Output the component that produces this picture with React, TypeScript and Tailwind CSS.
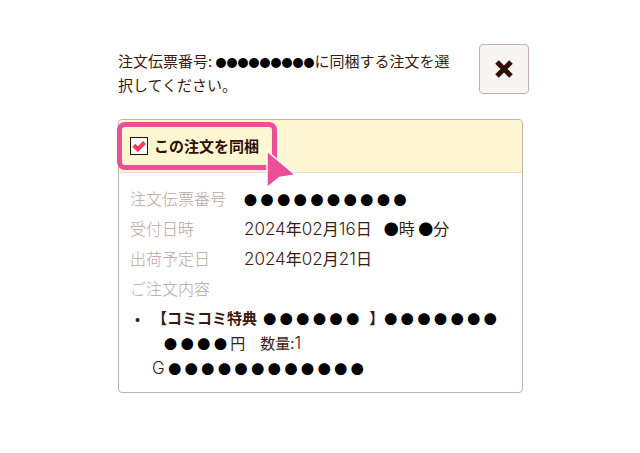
import { Fragment, useState } from 'react';

interface DotsProps {
  count: number;
}

// Masked characters
function Dots({ count }: DotsProps) {
  return (
    <span className="text-[16px] leading-none text-black">
      {Array.from({ length: count }, (_, i) => (
        <Fragment key={i}>
          {i > 0 && ' '}
          <span className="text-[13px]">●</span>
        </Fragment>
      ))}
    </span>
  );
}

const latin = "font-['Inter',sans-serif] text-[17px] font-light leading-none";

function OrderDate({ year, month, day }: { year: string; month: string; day: string }) {
  return (
    <span>
      <span className={latin}>{year}</span>年<span className={latin}>{month}</span>月
      <span className={latin}>{day}</span>日
    </span>
  );
}

function Pointer() {
  return (
    <svg className="absolute left-[146px] top-[27px] h-[44px] w-[34px]" viewBox="0 0 34 44">
      <path d="M2 4 L30.5 28 L14.5 30.5 L2 40.5 Z" fill="#ea4f97" stroke="#fff" strokeWidth="1.5" />
    </svg>
  );
}

export default function App() {
  const [bundled, setBundled] = useState(true);
  const term = 'w-[114px] shrink-0 font-light text-[#b9a5a1]';
  const maskedUnit = 'text-[15px] leading-none text-black';

  return (
    <main className="bg-white pt-11 pr-[111px] pb-14 pl-[118px] font-['Noto_Sans_CJK_JP',sans-serif] text-[15px] text-[#3a1a12]">
      <header className="flex items-start justify-between gap-6">
        <p className="flex-1 pt-[5px] leading-6">
          注文伝票番号: <span className="text-[11px] leading-none text-black">●●●●●●●●●</span>
          に同梱する注文を選択してください。
        </p>
        <button
          type="button"
          aria-label="閉じる"
          className="flex size-[50px] shrink-0 items-center justify-center rounded border border-[#c4b1ae] bg-[#f8f4f3]"
        >
          <svg className="size-5" viewBox="0 0 20 20">
            <path d="M3 3 L17 17 M17 3 L3 17" stroke="#2f0f06" strokeWidth="5" />
          </svg>
        </button>
      </header>

      <section className="mt-[22px] mr-1.5 rounded border border-[#c4b1ae]">
        <div className="relative rounded-t border-b border-[#e8dfdc] bg-[#fff7d2]">
          <label className="flex h-[52px] w-fit items-center gap-1.5 pl-[11px] font-bold text-[#2f0f06]">
            <span className="relative size-[18px]">
              <input
                type="checkbox"
                checked={bundled}
                onChange={(e) => setBundled(e.target.checked)}
                className="block size-[18px] appearance-none border border-[#2f0f06] bg-white"
              />
              {bundled && (
                <svg className="pointer-events-none absolute inset-0 size-[18px]" viewBox="0 0 18 18">
                  <path d="M3.8 8.2 L7.8 12.2 L14.5 5.5" fill="none" stroke="#fb3b58" strokeWidth="4.2" />
                </svg>
              )}
            </span>
            この注文を同梱
          </label>
          <div className="pointer-events-none absolute top-0.5 -left-0.5 h-12 w-40 rounded-lg border-[5px] border-[#ea4f97]" />
          <Pointer />
        </div>

        <div className="px-[11px] pt-2.5 pb-3">
          <dl className="text-[16px] leading-[30px]">
            <div className="flex">
              <dt className={term}>注文伝票番号</dt>
              <dd><Dots count={10} /></dd>
            </div>
            <div className="flex">
              <dt className={term}>受付日時</dt>
              <dd className="flex gap-3">
                <OrderDate year="2024" month="02" day="16" />
                <span>
                  <span className={maskedUnit}>●</span>時 <span className={maskedUnit}>●</span>分
                </span>
              </dd>
            </div>
            <div className="flex">
              <dt className={term}>出荷予定日</dt>
              <dd><OrderDate year="2024" month="02" day="21" /></dd>
            </div>
            <div className="flex">
              <dt className={term}>ご注文内容</dt>
            </div>
          </dl>
          <ul className="mt-0.5 leading-[25px]">
            <li className="flex gap-3 pl-[5px]">
              <span>•</span>
              <div>
                <div className="flex items-baseline">
                  <b className="mr-1.5">【コミコミ特典</b>
                  <Dots count={6} />
                  <b className="ml-2.5">】</b>
                  <Dots count={7} />
                </div>
                <div className="pl-3"><Dots count={4} /> 円　数量:<span className={latin}>1</span></div>
                <div><span className={latin}>G</span> <Dots count={12} /></div>
              </div>
            </li>
          </ul>
        </div>
      </section>
    </main>
  );
}
